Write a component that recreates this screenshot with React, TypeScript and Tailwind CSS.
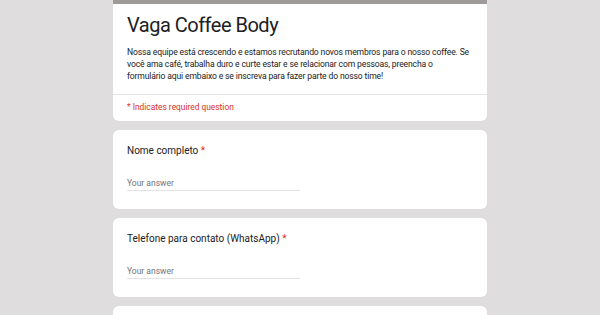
export default function App() {
  const font = { fontFamily: "Roboto, 'Noto Sans', Arial, sans-serif" };
  return (
    <div className="w-[600px] h-[315px] overflow-hidden bg-[#dfdddd]" style={font}>
      <div className="mx-auto w-[374px] flex flex-col gap-[9px]">
        <div className="bg-white rounded-b-[6px] border-t-4 border-[#9f9b9b]">
          <div className="px-[14px] pt-[9px] pb-[12px]">
            <div className="text-[20px] leading-[24px] text-[#202124] tracking-[-0.5px]">Vaga Coffee Body</div>
            <div className="mt-[9px] text-[8.6px] leading-[12px] text-[#202124] tracking-[-0.15px]">
              Nossa equipe está crescendo e estamos recrutando novos membros para o nosso coffee. Se você ama café, trabalha duro e curte estar e se relacionar com pessoas, preencha o
              <br />
              formulário aqui embaixo e se inscreva para fazer parte do nosso time!
            </div>
          </div>
          <div className="border-t border-[#e6e6e6] px-[14px] pt-[6px] pb-[8px] text-[8.4px] leading-[12px] text-[#d93025]">
            * Indicates required question
          </div>
        </div>
        {["Nome completo", "Telefone para contato (WhatsApp)"].map((q) => (
          <div key={q} className="bg-white rounded-[6px] h-[79px] px-[14px] pt-[14px]">
            <div className="text-[10px] leading-[13px] text-[#202124]">
              {q} <span className="text-[#d93025]">*</span>
            </div>
            <div className="mt-[21px] w-[173px] border-b border-[#e3e3e3] pb-[1px] text-[8.5px] leading-[11px] text-[#70757a]">
              Your answer
            </div>
          </div>
        ))}
        <div className="bg-white rounded-[6px] h-[79px]" />
      </div>
    </div>
  );
}
